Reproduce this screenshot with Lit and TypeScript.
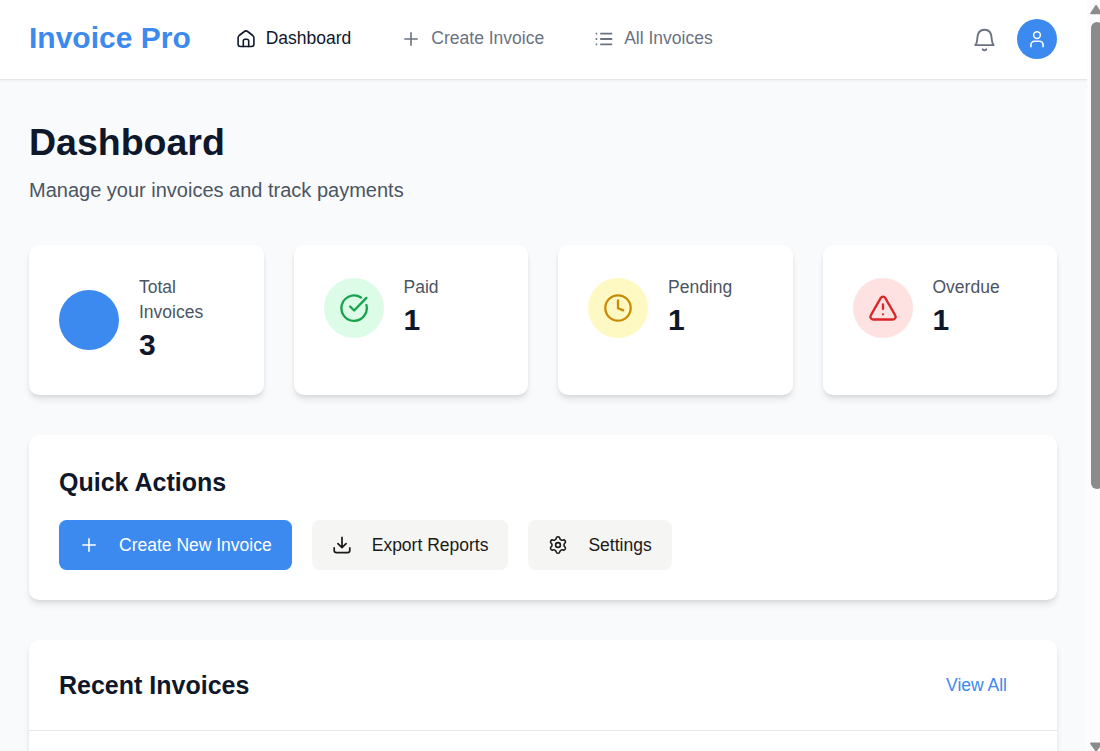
import { LitElement, html, css, svg } from "lit";
import { customElement } from "lit/decorators.js";

function gearPath(c: number, outer: number, inner: number): string {
  const pt = (r: number, deg: number) => {
    const a = (deg * Math.PI) / 180;
    return `${(c + r * Math.cos(a)).toFixed(2)} ${(c + r * Math.sin(a)).toFixed(2)}`;
  };
  let d = `M${pt(inner, -120)}`;
  for (let i = 0; i < 6; i++) {
    const t = -90 + i * 60;
    d += ` Q${pt(inner, t - 19)} ${pt(outer - 1.1, t - 14)} Q${pt(outer + 0.1, t - 11)} ${pt(outer, t)}`;
    d += ` Q${pt(outer + 0.1, t + 11)} ${pt(outer - 1.1, t + 14)} Q${pt(inner, t + 19)} ${pt(inner, t + 30)}`;
  }
  return d + "Z";
}

const shapes: Record<string, { size: number; width: number; body: unknown }> = {
  home: {
    size: 20,
    width: 1.6,
    body: svg`<path d="M2.100 8.900c0-1 .4-1.800 1.100-2.400l5.200-4a2.600 2.600 0 0 1 3.200 0l5.200 4c.7.6 1.100 1.400 1.100 2.400v6.400a2.200 2.200 0 0 1-2.200 2.200H4.300a2.200 2.200 0 0 1-2.200-2.200z"/><path d="M7.300 17.500v-5.400a1.800 1.800 0 0 1 1.800-1.800h1.800a1.800 1.800 0 0 1 1.800 1.800v5.400"/>`,
  },
  plus: { size: 20, width: 1.6, body: svg`<path stroke-linecap="butt" d="M10 3.200v13.600M3.300 10h13.500"/>` },
  list: {
    size: 20,
    width: 1.8,
    body: svg`<path stroke-linecap="butt" d="M6.200 4.700h12M6.200 10h12M6.200 15.300h12M1.700 4.700h1.500M1.700 10h1.500M1.700 15.300h1.500"/>`,
  },
  bell: {
    size: 25,
    width: 1.9,
    body: svg`<path d="M3.300 18.100c1.500-1.500 1.900-4.100 2.100-7.300.3-5.500 2.900-8.100 7.100-8.100s6.800 2.600 7.100 8.100c.2 3.200.6 5.800 2.100 7.300z"/><path d="M10.700 22.300c1 1.300 2.600 1.300 3.600 0"/>`,
  },
  user: {
    size: 20,
    width: 1.600,
    body: svg`<circle cx="10" cy="6.100" r="3.400"/><path stroke-linecap="butt" d="M3.900 18.200v-2.300a3.600 3.600 0 0 1 3.600-3.600h5a3.600 3.600 0 0 1 3.600 3.600v2.300"/>`,
  },
  check: {
    size: 30,
    width: 2.300,
    body: svg`<path d="M22 4.500A12.700 12.700 0 1 0 27.400 12"/><path d="m11.100 13.500 4 4L27.400 4.900"/>`,
  },
  clock: {
    size: 30,
    width: 2.300,
    body: svg`<circle cx="15" cy="15" r="12.700"/><path d="M15 7.400v7.800l5.200 2.200"/>`,
  },
  alert: {
    size: 30,
    width: 2.300,
    body: svg`<path d="M12.800 4.900a2.550 2.550 0 0 1 4.400 0l9.900 17.200a2.800 2.800 0 0 1-2.400 4.400H5.300a2.800 2.800 0 0 1-2.400-4.400z"/><path d="M15 11.300v4.800M15 21.300v.05"/>`,
  },
  download: {
    size: 20,
    width: 1.700,
    body: svg`<path d="M10 2.400v10.100M5.900 8.600l4.100 4.100 4.100-4.100M2.200 12.900v2.400a2.400 2.400 0 0 0 2.400 2.400h10.800a2.400 2.400 0 0 0 2.400-2.400v-2.400"/>`,
  },
  gear: {
    size: 20,
    width: 1.600,
    body: svg`<path d=${gearPath(10, 8.3, 6)}/><circle cx="10" cy="10" r="2.400"/>`,
  },
};

const icon = (name: string) => {
  const s = shapes[name];
  return html`<svg width=${s.size} height=${s.size} viewBox="0 0 ${s.size} ${s.size}" fill="none"
    stroke="currentColor" stroke-width=${s.width} stroke-linecap="round" stroke-linejoin="round">${s.body}</svg>`;
};

const stats = [
  { label: "Total Invoices", value: 3, tone: "blue", icon: "" },
  { label: "Paid", value: 1, tone: "green", icon: "check" },
  { label: "Pending", value: 1, tone: "yellow", icon: "clock" },
  { label: "Overdue", value: 1, tone: "red", icon: "alert" },
];

@customElement("app-root")
export class AppRoot extends LitElement {
  static styles = css`
    :host {
      display: flex;
      height: 751px;
      overflow: hidden;
      font-family: "Liberation Sans", Arial, sans-serif;
      font-size: 17.5px;
      line-height: 25px;
      color: #0f172a;
      background: #f9fafb;
    }
    * { box-sizing: border-box; }
    svg { display: block; flex: none; }
    h1, h2, p { margin: 0; }
    .page { flex: 1; min-width: 0; height: 751px; overflow: hidden; background: #f9fafc; }
    .header {
      height: 80px; padding: 0 30px 2px 29px; display: flex; align-items: center;
      background: #fff; border-bottom: 1px solid #e5e7eb;
      box-shadow: 0 1.25px 2.5px rgba(0, 0, 0, 0.05);
    }
    .logo { font-size: 30px; line-height: 40px; padding-bottom: 1px; font-weight: 700; color: #3c8aef; white-space: nowrap; }
    .nav { display: flex; gap: 50px; margin-left: 45px; flex: 1; }
    .link { display: flex; align-items: center; gap: 10px; color: #6b7280; white-space: nowrap; }
    .link svg { margin-top: 1px; }
    .link.active { color: #0f172a; }
    .tools { display: flex; align-items: center; gap: 20px; color: #6b7280; padding-top: 1px; }
    .avatar {
      width: 40px; height: 40px; border-radius: 50%; background: #3c8aef; color: #fff;
      display: flex; align-items: center; justify-content: center;
    }
    .main { padding: 40px 30px 0 29px; }
    .title { font-size: 37.5px; line-height: 45px; font-weight: 700; }
    .subtitle { margin-top: 10px; font-size: 20px; line-height: 30px; color: #4b5563; }
    .stats { display: grid; grid-template-columns: repeat(4, 1fr); gap: 30px; margin: 40px 0; }
    .card {
      background: #fff; border-radius: 10px;
      box-shadow: 0 5px 7.5px -1.25px rgba(0, 0, 0, 0.1), 0 2.5px 5px -2.5px rgba(0, 0, 0, 0.1);
    }
    .stat { padding: 30px; }
    .row { display: flex; align-items: center; gap: 20px; }
    .dot {
      width: 60px; height: 60px; flex: none; border-radius: 50%;
      display: flex; align-items: center; justify-content: center;
    }
    .blue { background: #3c8aef; }
    .green { background: #dcfce7; color: #16a34a; }
    .yellow { background: #fef9c3; color: #ca8a04; }
    .red { background: #fee2e2; color: #dc2626; }
    .label { color: #4b5563; }
    .value { font-size: 30px; line-height: 39px; padding-bottom: 1px; font-weight: 700; }
    .actions { padding: 30px; margin-bottom: 40px; }
    .heading { font-size: 25px; line-height: 35px; font-weight: 700; }
    .buttons { display: flex; gap: 20px; margin-top: 20px; }
    .button {
      height: 50px; padding: 0 20px; display: flex; align-items: center; gap: 20px;
      border-radius: 7.5px; background: #f5f5f4; color: #1c1917; white-space: nowrap;
    }
    .button.primary { background: #3c8aef; color: #fff; }
    .recent { height: 300px; }
    .recent-head {
      height: 91px; padding: 0 50px 0 30px; display: flex; align-items: center;
      justify-content: space-between; border-bottom: 1px solid #e5e7eb;
    }
    .view { color: #3c8aef; }
    .scroll {
      width: 13px; flex: none; background: #fcfcfc; height: 751px; padding: 5px 0 0 3px;
      display: flex; flex-direction: column; justify-content: space-between; overflow: hidden;
    }
    .thumb { width: 12px; height: 467px; margin: 7px 0 0 1px; border-radius: 6px; background: #8b8b8b; }
    .upper { flex: none; }
  `;

  render() {
    return html`
      <div class="page">
        <header class="header">
          <div class="logo">Invoice Pro</div>
          <nav class="nav">
            <a class="link active">${icon("home")}<span>Dashboard</span></a>
            <a class="link">${icon("plus")}<span>Create Invoice</span></a>
            <a class="link">${icon("list")}<span>All Invoices</span></a>
          </nav>
          <div class="tools">
            ${icon("bell")}
            <div class="avatar">${icon("user")}</div>
          </div>
        </header>
        <main class="main">
          <h1 class="title">Dashboard</h1>
          <p class="subtitle">Manage your invoices and track payments</p>
          <section class="stats">
            ${stats.map(
              (s) => html`<div class="card stat">
                <div class="row">
                  <div class="dot ${s.tone}">${s.icon ? icon(s.icon) : ""}</div>
                  <div>
                    <p class="label">${s.label}</p>
                    <p class="value">${s.value}</p>
                  </div>
                </div>
              </div>`
            )}
          </section>
          <section class="card actions">
            <h2 class="heading">Quick Actions</h2>
            <div class="buttons">
              <a class="button primary">${icon("plus")}<span>Create New Invoice</span></a>
              <a class="button">${icon("download")}<span>Export Reports</span></a>
              <a class="button">${icon("gear")}<span>Settings</span></a>
            </div>
          </section>
          <section class="card recent">
            <div class="recent-head">
              <h2 class="heading">Recent Invoices</h2>
              <a class="view">View All</a>
            </div>
          </section>
        </main>
      </div>
      <div class="scroll">
        <div class="upper">
          <svg width="13" height="10" viewBox="0 0 13 10" fill="#8b8b8b"><path d="M5.300.6a1 1 0 0 1 1.600 0l4.900 7.200a1 1 0 0 1-.8 1.500H1.200a1 1 0 0 1-.8-1.500z"/></svg>
          <div class="thumb"></div>
        </div>
        <svg width="13" height="9" viewBox="0 0 13 9" fill="#8b8b8b"><path d="M5.300 9a1 1 0 0 0 1.600 0l4.900-6.800A1 1 0 0 0 11 .5H1.200a1 1 0 0 0-.8 1.700z"/></svg>
      </div>
    `;
  }
}
